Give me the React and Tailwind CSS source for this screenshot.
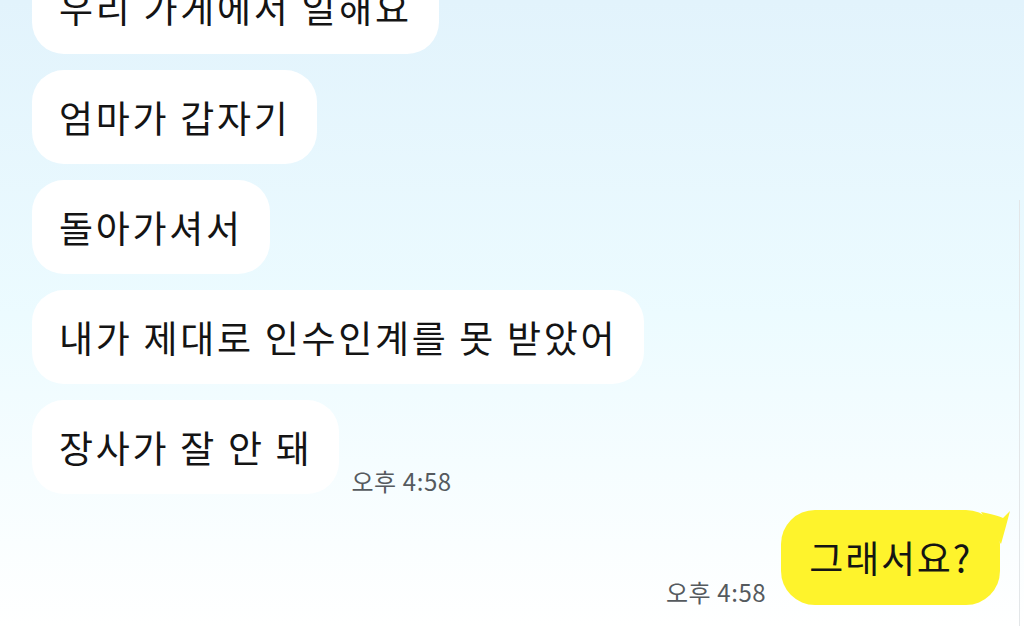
import React from "react";

const font = { fontFamily: '"Noto Sans CJK KR", "Noto Sans", sans-serif' };

function Bubble({ children, className = "" }) {
  return (
    <div
      className={`w-fit rounded-[32px] bg-white px-[27px] py-[22px] text-[37px] leading-[50px] tracking-[2.7px] text-[#141414] ${className}`}
    >
      {children}
    </div>
  );
}

export default function App() {
  return (
    <div
      className="relative h-[626px] w-[1024px] overflow-hidden bg-gradient-to-b from-[#e2f3fc] via-[#ecfbff] to-[#ffffff]"
      style={font}
    >
      <div className="flex flex-col gap-4 pl-8">
        <Bubble className="mt-[-40px]">우리 가게에서 일해요</Bubble>
        <Bubble>엄마가 갑자기</Bubble>
        <Bubble>돌아가셔서</Bubble>
        <Bubble>내가 제대로 인수인계를 못 받았어</Bubble>
        <div className="flex items-end gap-3">
          <Bubble>장사가 잘 안 돼</Bubble>
          <span className="mb-[-2px] text-[24px] leading-[30px] tracking-[0.6px] text-[#555a5e]">오후 4:58</span>
        </div>
      </div>
      <div className="mt-4 flex items-end justify-end gap-[15px] pr-6">
        <span className="mb-[-2px] text-[24px] leading-[30px] tracking-[0.6px] text-[#555a5e]">오후 4:58</span>
        <div className="relative">
          <div className="rounded-[34px] bg-[#fef32c] px-[28px] py-[22px] text-[37px] leading-[51px] tracking-[1.8px] text-[#141414]">
            그래서요?
          </div>
          <svg
            className="absolute right-[-11px] top-0"
            width="30"
            height="34"
            viewBox="0 0 30 34"
          >
            <path d="M0 2 C10 4 18 6 22 8 L29 1 L25 16 L20 34 Z" fill="#fef32c" />
          </svg>
        </div>
      </div>
      <div className="absolute right-[4px] top-[200px] h-[426px] w-px bg-[#e3e6e8]" />
    </div>
  );
}
